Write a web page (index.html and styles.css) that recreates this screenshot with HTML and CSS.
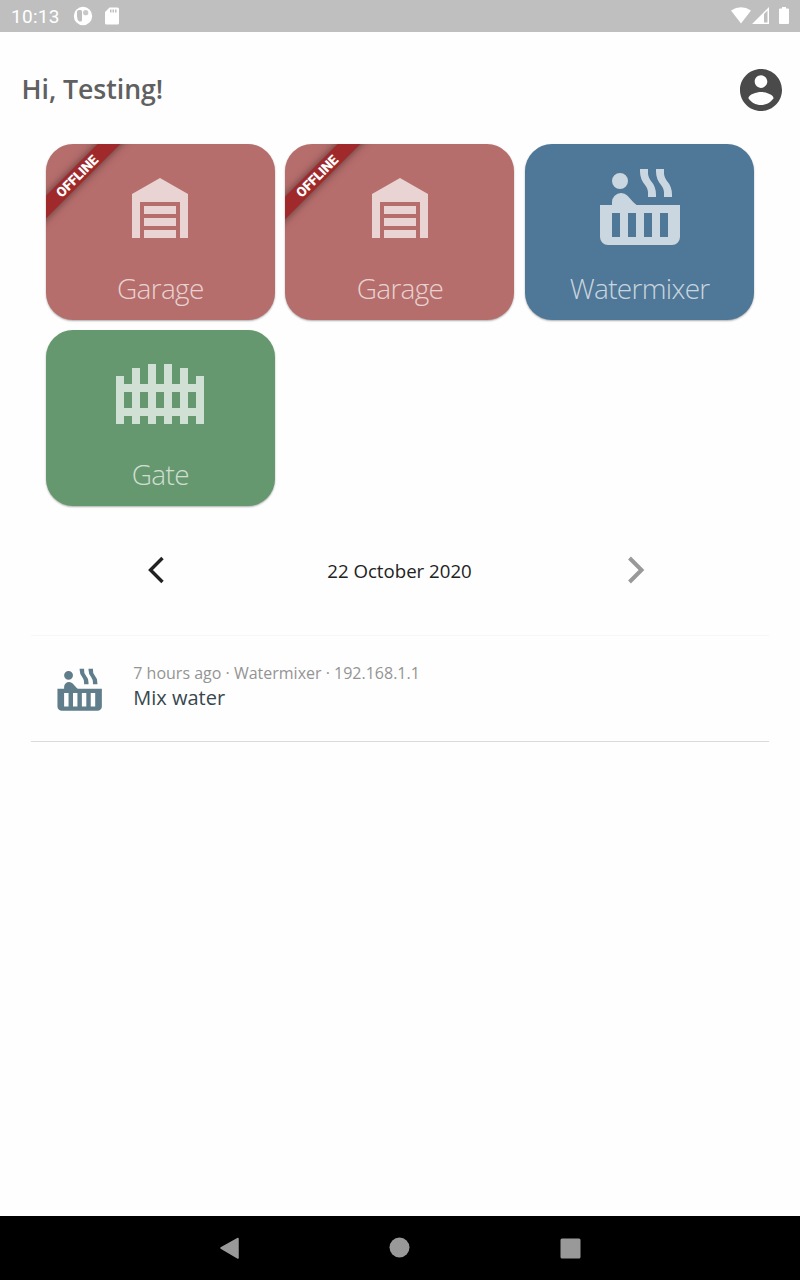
FILE: index.html
```html
<!DOCTYPE html>
<html lang="en">
<head>
<meta charset="utf-8">
<title>Home</title>
<link rel="stylesheet" href="styles.css">
</head>
<body>
<svg class="defs" width="0" height="0">
  <symbol id="garage" viewBox="0 0 24 24"><path d="M19,20H17V11H7V20H5V9L12,5L19,9V20M8,12H16V14H8V12M8,15H16V17H8V15M16,18V20H8V18H16Z"/></symbol>
  <symbol id="tub" viewBox="0 0 24 24"><path d="M7 4A2 2 0 1 1 5 6A2 2 0 0 1 7 4M11.15 12H22V20A2 2 0 0 1 20 22H4A2 2 0 0 1 2 20V12H5V11.25A2.25 2.25 0 0 1 7.25 9H7.28A2.22 2.22 0 0 1 8.88 9.7L10.28 11.25A5.24 5.24 0 0 0 11.15 12M7 20V14H5V20H7M11 20V14H9V20H11M15 20V14H13V20H15M19 20V14H17V20H19M18.65 5.86A5.23 5.23 0 0 1 20 9.41V10H18V9.41A3.34 3.34 0 0 0 17.35 7.14A5.23 5.23 0 0 1 16 3.59V3H18V3.59A3.34 3.34 0 0 0 18.65 5.86M14.65 5.86A5.23 5.23 0 0 1 16 9.41V10H14V9.41A3.34 3.34 0 0 0 13.35 7.14A5.23 5.23 0 0 1 12 3.59V3H14V3.59A3.34 3.34 0 0 0 14.65 5.86Z"/></symbol>
  <symbol id="gate" viewBox="0 0 24 24"><path d="M9 5V10H7V6H5V10H3V8H1V20H3V18H5V20H7V18H9V20H11V18H13V20H15V18H17V20H19V18H21V20H23V8H21V10H19V6H17V10H15V5H13V10H11V5H9M3 12H5V16H3V12M7 12H9V16H7V12M11 12H13V16H11V12M15 12H17V16H15V12M19 12H21V16H19V12Z"/></symbol>
</svg>
<div class="screen">
  <div class="status">
    <span class="clock">10:13</span>
    <svg class="st-app" viewBox="0 0 20 20"><path fill-rule="evenodd" d="M10 .8a9.200 9.200 0 1 0 0 18.400A9.200 9.200 0 0 0 10 .8ZM6 4H7.500Q9 4 9 5.500V14Q9 15.500 7.500 15.500H6.500Q4 14 4 10.500V6Q4 4 6 4Z"/><circle cx="12.700" cy="6.700" r="2.600" fill="#c9c9c9"/></svg>
    <svg class="st-sd" viewBox="0 0 16 18"><path fill-rule="evenodd" d="M5.500 .5H13.500Q15 .5 15 2V16Q15 17.500 13.500 17.500H2.500Q1 17.500 1 16V5ZM6 2.500V5.500H7.500V2.500ZM8.500 2.500V5.500H10V2.500ZM11 2.500V5.500H12.500V2.500Z"/></svg>
    <div class="st-right">
      <svg width="20" height="17" viewBox="0 0 20 17"><path d="M0 3.500Q10-3 20 3.500L10 16.500Z"/></svg>
      <svg width="17" height="17" viewBox="0 0 17 17"><path fill-rule="evenodd" d="M17 0V17H0ZM12 7V15.500H15.500V3.500Z"/></svg>
      <svg class="st-bat" width="10" height="17" viewBox="0 0 10 17"><path d="M3 0H7V1.500H9Q10 1.500 10 2.500V16Q10 17 9 17H1Q0 17 0 16V2.500Q0 1.500 1 1.500H3Z"/></svg>
    </div>
  </div>
  <header class="header">
    <h1>Hi, Testing!</h1>
    <svg class="avatar" viewBox="2 2 20 20"><path d="M12 2C6.480 2 2 6.480 2 12s4.480 10 10 10 10-4.480 10-10S17.520 2 12 2zm0 3c1.660 0 3 1.340 3 3s-1.340 3-3 3-3-1.340-3-3 1.340-3 3-3zm0 14.200c-2.500 0-4.710-1.280-6-3.220.03-1.990 4-3.080 6-3.080 1.990 0 5.970 1.090 6 3.080-1.290 1.940-3.500 3.220-6 3.220z"/></svg>
  </header>
  <main>
    <section class="tiles">
      <div class="tile red"><div class="clip"><span class="ribbon">OFFLINE</span></div><svg class="icon"><use href="#garage"/></svg><span class="label">Garage</span></div>
      <div class="tile red"><div class="clip"><span class="ribbon">OFFLINE</span></div><svg class="icon"><use href="#garage"/></svg><span class="label">Garage</span></div>
      <div class="tile blue"><svg class="icon"><use href="#tub"/></svg><span class="label">Watermixer</span></div>
      <div class="tile green"><svg class="icon"><use href="#gate"/></svg><span class="label">Gate</span></div>
    </section>
    <nav class="dates">
      <svg class="chev" viewBox="0 0 18 28"><path d="M15.500 2L3.500 14L15.500 26"/></svg>
      <span>22 October 2020</span>
      <svg class="chev next" viewBox="0 0 18 28"><path d="M2.500 2L14.500 14L2.500 26"/></svg>
    </nav>
    <article class="event">
      <svg class="event-icon"><use href="#tub"/></svg>
      <div class="event-text">
        <p class="meta">7 hours ago · Watermixer · 192.168.1.1</p>
        <p class="what">Mix water</p>
      </div>
    </article>
  </main>
  <footer class="navbar">
    <svg width="400" height="64" viewBox="200 0 400 64"><path d="M221 32L238 22.500V42Z" stroke="#999" stroke-width="1.500" stroke-linejoin="round"/><circle cx="399.500" cy="31.500" r="10"/><rect x="560.500" y="22.500" width="20" height="20" rx="1.500"/></svg>
  </footer>
</div>
</body>
</html>
```

FILE: styles.css
```css
* { box-sizing: border-box; margin: 0; padding: 0; }
body { font-family: "Open Sans", sans-serif; background: #fefefe; }
svg { display: block; flex: none; }
.defs { position: absolute; }
.screen { width: 800px; height: 1280px; display: flex; flex-direction: column; overflow: hidden; }
.status { height: 32px; background: #bfbfbf; display: flex; align-items: center; padding: 0 11px; fill: #fff; }
.clock { font: 400 19px/32px Roboto, sans-serif; color: #fff; letter-spacing: .3px; width: 62px; padding-top: 1px; }
.st-app { width: 20px; height: 20px; }
.st-sd { width: 16px; height: 18px; margin-left: 11px; }
.st-right { margin-left: auto; display: flex; gap: 2px; padding-bottom: 2px; }
.st-right svg:nth-child(2) { margin-left: -1px; }
.st-bat { margin-left: 8px; }
.header { height: 112px; padding: 3px 18px 0 21.5px; display: flex; align-items: center; justify-content: space-between; }
.header h1 { font-size: 26.67px; font-weight: 600; line-height: 36px; letter-spacing: -.04px; color: #606060; padding-bottom: 1px; }
.avatar { width: 42px; height: 42px; fill: #4a4a4a; }
main { flex: 1; }
.tiles { padding: 0 45.8px; display: grid; grid-template-columns: repeat(3, 229px); grid-auto-rows: 175.5px; gap: 10.7px; }
.tile { position: relative; border-radius: 27px; display: flex; flex-direction: column; align-items: center; padding-top: 14px; box-shadow: 0 1px 2px rgba(0,0,0,.32); }
.red { background: #b66e6c; }
.blue { background: #4f7797; padding-top: 13px; }
.blue .label { margin-top: 16px; }
.green { background: #66986f; padding-top: 13.5px; }
.icon { width: 96px; height: 96px; fill: rgba(255,255,255,.7); }
.label { margin-top: 15px; font-size: 28px; font-weight: 300; line-height: 38px; letter-spacing: -.7px; color: rgba(255,255,255,.7); }
.clip { position: absolute; inset: 0; border-radius: 27px; overflow: hidden; }
.ribbon { position: absolute; left: -68.5px; top: 23.700px; width: 200px; height: 16px; transform: rotate(-45deg); background: #a02a2b; box-shadow: 0 0 8px rgba(0,0,0,.5); color: #fff; text-align: center; font: 900 13.6px/16px Roboto, sans-serif; }
.dates { height: 129px; padding: 0 155px 0 147px; display: flex; align-items: center; justify-content: space-between; font-size: 18.67px; color: #222; }
.dates span { margin-left: 7px; }
.chev { width: 18px; height: 28px; fill: none; stroke: #222; stroke-width: 3.400; }
.next { stroke: #999; stroke-width: 4; }
.event { margin: 0 31px; height: 107px; padding: 0 22px; display: flex; align-items: center; gap: 27px; border-top: 1px solid #f7f7f7; border-bottom: 1px solid #dadada; }
.event-icon { width: 53.3px; height: 53.3px; fill: #607d8b; }
.event-text { padding-bottom: 4px; }
.meta { font-size: 16px; line-height: 24px; color: #949494; }
.what { font-size: 20px; line-height: 26px; color: #37474f; }
.navbar { height: 64px; background: #000; display: flex; justify-content: center; fill: #999; }
```
